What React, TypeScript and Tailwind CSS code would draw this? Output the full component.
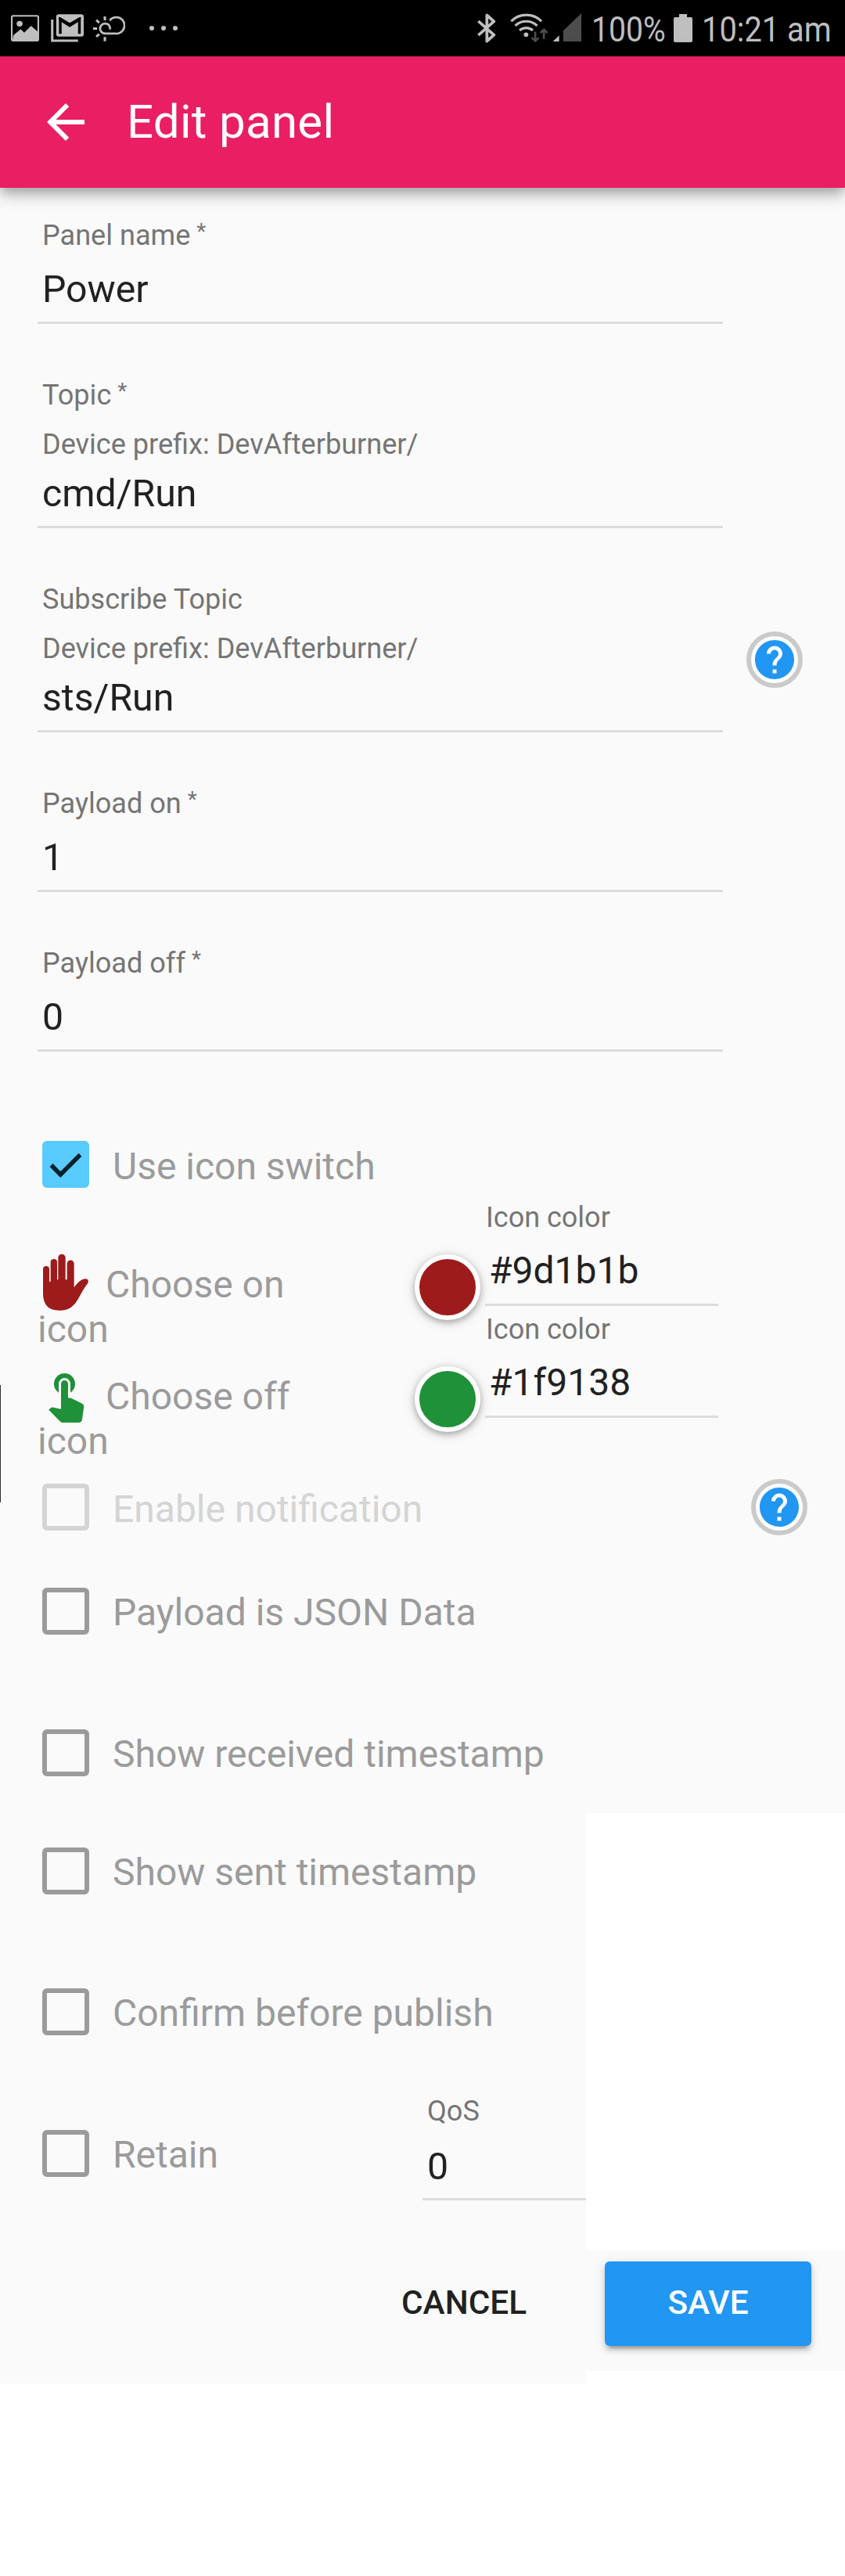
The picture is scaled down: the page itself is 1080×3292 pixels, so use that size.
import React from "react";
import { MdArrowBack, MdHelp, MdTouchApp } from "react-icons/md";

function StatusBar() {
  return (
    <div className="flex h-[72px] items-start bg-black text-[#bfbfbf]">
      <svg className="ml-[14px] mt-[19px] h-[34px] w-[36px] shrink-0" viewBox="41 56 104 102" preserveAspectRatio="none">
        <rect x="44" y="60" width="98" height="95" rx="5" fill="none" stroke="currentColor" strokeWidth="6" />
        <circle cx="73" cy="90" r="11" fill="currentColor" />
        <path d="M50 134L77 111L90 124L115 98L142 122V156H46Z" fill="currentColor" />
      </svg>
      <svg className="ml-[15px] mt-[18px] h-[36px] w-[42px] shrink-0" viewBox="189 54 122 108" preserveAspectRatio="none">
        <path d="M194 75V156H290" fill="none" stroke="currentColor" strokeWidth="9" />
        <rect x="209" y="55" width="102" height="85" rx="9" fill="currentColor" />
        <path d="M224 130V75L259 98L295 75V130" fill="none" stroke="#000" strokeWidth="10" />
        <path d="M218 65L224 66L259 88L295 66L300 65V76L259 100L218 76Z" fill="#000" />
      </svg>
      <svg className="ml-[12px] mt-[20px] h-[33px] w-[41px] shrink-0" viewBox="347 60 120 98" preserveAspectRatio="none">
        <path
          d="M410 112C412 98 404 90 392 90A19 19 0 0 0 392 128H430A31 31 0 1 0 409 78"
          fill="none"
          stroke="currentColor"
          strokeWidth="8"
        />
        <path d="M391 63V78M391 141V157M347 109H362M359 77L370 87M359 140L370 130" stroke="currentColor" strokeWidth="9" />
      </svg>
      <div className="ml-[30.5px] mt-[33px] flex gap-[9px]">
        <span className="size-[6px] rounded-full bg-current" />
        <span className="size-[6px] rounded-full bg-current" />
        <span className="size-[6px] rounded-full bg-current" />
      </div>
      <svg className="ml-[383px] mt-[17px] h-[38px] w-[24px] shrink-0" viewBox="202 50 70 114" preserveAspectRatio="none">
        <path d="M206 80L264 133L238 157V57L264 81L206 134" fill="none" stroke="currentColor" strokeWidth="11" strokeLinejoin="round" />
      </svg>
      <svg className="ml-[18px] mt-[17px] h-[37px] w-[49px] shrink-0" viewBox="325 50 142 110" preserveAspectRatio="none">
        <g fill="none" stroke="currentColor" strokeWidth="9">
          <path d="M329 80A78 78 0 0 1 441 80" />
          <path d="M344 97A58 58 0 0 1 425 97" />
          <path d="M360 115A36 36 0 0 1 409 115" />
        </g>
        <circle cx="384" cy="131" r="8.5" fill="currentColor" />
        <path d="M418 120V154M405 143L418 155L431 143M450 147V113M437 124L450 112L463 124" fill="none" stroke="#4d4d4d" strokeWidth="8" />
      </svg>
      <svg className="ml-[5px] mt-[17px] h-[36px] w-[37px] shrink-0" viewBox="480 51 107 108" preserveAspectRatio="none">
        <path d="M482 159L505 136V159Z" fill="currentColor" />
        <path d="M520 159V118L587 51V159Z" fill="#4d4d4d" />
      </svg>
      <div className="ml-[13px] mt-[11px] w-[95px] whitespace-nowrap text-[45px] leading-[54px]">
        <span className="inline-block origin-left scale-x-[0.87]">100%</span>
      </div>
      <svg className="ml-[10px] mt-[18px] h-[36px] w-[24px] shrink-0" viewBox="0 0 24 36">
        <path d="M7 0H17V4H22Q24 4 24 6V34Q24 36 22 36H2Q0 36 0 34V6Q0 4 2 4H7Z" fill="currentColor" />
      </svg>
      <div className="ml-[12px] mt-[11px] w-[170px] whitespace-nowrap text-[45px] leading-[54px]">
        <span className="inline-block origin-left scale-x-[0.885]">10:21 am</span>
      </div>
    </div>
  );
}

function Field({
  label,
  required,
  prefix,
  value,
  className = "w-[876px]",
  valueClass = "mt-[19px] pb-[11px]",
}: {
  label: string;
  required?: boolean;
  prefix?: string;
  value: string;
  className?: string;
  valueClass?: string;
}) {
  return (
    <div className={`shrink-0 border-b-[3px] border-[#dcdcdc] ${className}`}>
      <div className="flex h-[40px] pl-[6px] text-[36.1px] leading-[40px] text-[#757575]">
        <span>{label}</span>
        {required ? <span className="-mt-[5px] ml-[8px] text-[28px]">*</span> : null}
      </div>
      {prefix ? <div className="mt-[23px] pl-[6px] text-[36.1px] leading-[40px] text-[#757575]">{prefix}</div> : null}
      <div className={`pl-[6px] text-[48.2px] leading-[60px] text-[#212121] ${valueClass}`}>{value}</div>
    </div>
  );
}

function Help() {
  return (
    <div className="size-[72px] shrink-0 rounded-full border-[6px] border-[#cacaca] bg-[#fcfcfc] text-[60px] text-[#2196f3]">
      <MdHelp />
    </div>
  );
}

function CheckMark() {
  return (
    <svg className="size-[60px]" viewBox="0 0 60 60" fill="none" stroke="#06202c" strokeWidth="5.5">
      <path d="M11.500 31L23.300 43L48.500 17.700" />
    </svg>
  );
}

function CheckRow({
  label,
  checked,
  disabled,
  className = "",
  children,
}: {
  label: string;
  checked?: boolean;
  disabled?: boolean;
  className?: string;
  children?: React.ReactNode;
}) {
  const box = checked
    ? "bg-[#58cbff]"
    : disabled
      ? "border-[6px] border-[#d4d4d4]"
      : "border-[6px] border-[#9b9b9b]";
  return (
    <div className={`flex h-[60px] items-center pl-[6px] ${className}`}>
      <div className={`size-[60px] shrink-0 rounded-[6px] ${box}`}>{checked ? <CheckMark /> : null}</div>
      <div
        className={`ml-[30px] text-[48px] leading-[60px] ${checked || disabled ? "pt-[5px]" : "pt-[4px]"} ${
          disabled ? "text-[#d4d4d4]" : "text-[#9b9b9b]"
        }`}
      >
        {label}
      </div>
      {children}
    </div>
  );
}

function HandIcon() {
  return (
    <svg className="mx-[6px] h-[74px] w-[60px]" viewBox="42 36 180 222">
      <path
        d="M45 96a12 12 0 0 1 24 0V143h5V69a12.500 12 0 0 1 25 0V136h4V52a14 14 0 0 1 28 0V136h6V75a13.500 13.500 0 0 1 27 0V166C178 148 190 133 208 133c9 0 14 8 8 18C202 168 192 188 180 209c-16 28-34 45-72 45-45 0-63-24-63-68z"
        fill="currentColor"
      />
    </svg>
  );
}

function IconRow({ icon, label, color, swatch }: { icon: React.ReactNode; label: string; color: string; swatch: string }) {
  return (
    <div className="flex h-[143px] items-start">
      <div className="w-[482px] pt-[78px] text-[48px] leading-[57px] text-[#9b9b9b]">
        <div className="flex h-[57px] items-center whitespace-nowrap">
          {icon}
          <span className="ml-[15px]">{label}</span>
        </div>
        <div>icon</div>
      </div>
      <div
        className={`mt-[68px] size-[84px] shrink-0 rounded-full border-[6px] border-white shadow-[0_3px_8px_rgba(0,0,0,0.3),0_2px_18px_rgba(0,0,0,0.12)] ${swatch}`}
      />
      <div className="ml-[6px] w-[298px] border-b-[3px] border-[#dcdcdc] pb-[12px] pt-px">
        <div className="pl-px text-[36px] leading-[40px] text-[#757575]">Icon color</div>
        <div className="mt-[18px] pl-[5px] text-[48px] leading-[60px] text-[#212121]">{color}</div>
      </div>
    </div>
  );
}

export default function App() {
  return (
    <div className="relative h-[3292px] w-[1080px] overflow-hidden bg-white font-['Roboto',sans-serif]">
      <StatusBar />
      <header className="relative flex h-[168px] items-center bg-[#e91e63] pl-[48px] text-white shadow-[0_6px_12px_-3px_rgba(0,0,0,0.2),0_12px_15px_0_rgba(0,0,0,0.14),0_3px_30px_0_rgba(0,0,0,0.12)]">
        <MdArrowBack className="text-[72px]" />
        <h1 className="ml-[42px] text-[60px] font-normal leading-[72px] tracking-[0.005em]">Edit panel</h1>
      </header>
      <main className="h-[2806px] bg-[#fafafa] px-[48px] pt-[41px]">
        <Field label="Panel name" required value="Power" />
        <Field
          className="mt-[71px] w-[876px]"
          label="Topic"
          required
          prefix="Device prefix: DevAfterburner/"
          value="cmd/Run"
          valueClass="mt-[13px] pb-[11px]"
        />
        <div className="mt-[71px] flex items-start justify-between pr-[6px]">
          <Field
            label="Subscribe Topic"
            prefix="Device prefix: DevAfterburner/"
            value="sts/Run"
            valueClass="mt-[13px] pb-[11px]"
          />
          <div className="pt-[61px]">
            <Help />
          </div>
        </div>
        <Field className="mt-[71px] w-[876px]" label="Payload on" required value="1" />
        <Field className="mt-[71px] w-[876px]" label="Payload off" required value="0" />

        <CheckRow className="mt-[114px]" label="Use icon switch" checked />
        <div className="mt-[17px]">
          <IconRow icon={<span className="-mt-[6px] text-[#9d1b1b]"><HandIcon /></span>} label="Choose on" color="#9d1b1b" swatch="bg-[#9d1b1b]" />
          <IconRow icon={<MdTouchApp className="-mt-[5px] text-[72px] text-[#1f9138]" />} label="Choose off" color="#1f9138" swatch="bg-[#1f9138]" />
        </div>
        <CheckRow className="mt-[75px]" label="Enable notification" disabled>
          <div className="ml-auto">
            <Help />
          </div>
        </CheckRow>
        <CheckRow className="mt-[73px]" label="Payload is JSON Data" />
        <CheckRow className="mt-[121px]" label="Show received timestamp" />
        <CheckRow className="mt-[91px]" label="Show sent timestamp" />
        <CheckRow className="mt-[120px]" label="Confirm before publish" />
        <div className="mt-[77px] flex items-start">
          <CheckRow className="mt-[44px] w-[492px] shrink-0" label="Retain" />
          <Field className="w-[300px]" label="QoS" value="0" valueClass="mt-[21px] pb-[10px]" />
        </div>
        <div className="mt-[78px] flex h-[108px] justify-end text-[42.3px] font-medium leading-[105px]">
          <button className="mr-[100px] pb-[3px] text-[#212121]">CANCEL</button>
          <button className="-mr-[5px] w-[264px] rounded-[6px] bg-[#2196f3] pb-[3px] text-white shadow-[0_9px_3px_-6px_rgba(0,0,0,0.2),0_6px_6px_0_rgba(0,0,0,0.14),0_3px_15px_0_rgba(0,0,0,0.12)]">
            SAVE
          </button>
        </div>
      </main>
      <div className="absolute left-[749px] top-[2317px] h-[559px] w-[331px] bg-white" />
      <div className="absolute left-[749px] top-[3030px] h-[16px] w-[331px] bg-white" />
      <div className="absolute left-0 top-[1770px] h-[150px] w-px bg-[#303030]" />
    </div>
  );
}
